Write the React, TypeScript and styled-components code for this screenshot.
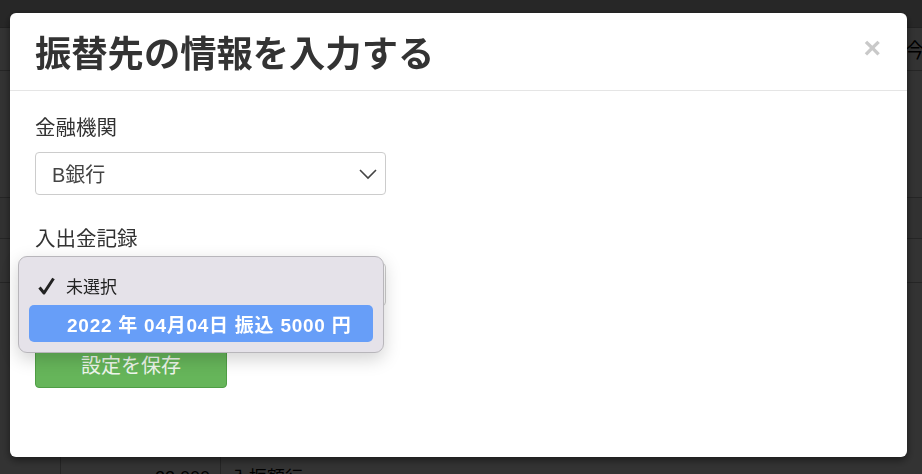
import styled, { createGlobalStyle } from "styled-components";

const GlobalStyle = createGlobalStyle`
  html, body {
    margin: 0;
    padding: 0;
    width: 922px;
    height: 474px;
    overflow: hidden;
    background: #fff;
    font-family: "Liberation Sans", "Noto Sans CJK JP", sans-serif;
    color: #333;
  }
`;

/* ---- page behind the modal ---- */

const Page = styled.div`
  width: 922px;
  height: 474px;
  background: #fff;
  display: flex;
  flex-direction: column;
`;

const TopBar = styled.div`
  height: 27px;
  background: #c4c4c4;
  border-bottom: 1px solid #aaa;
`;

const HeadRow = styled.div`
  height: 42px;
  display: grid;
  grid-template-columns: 905px 1fr;
  align-items: center;
  border-bottom: 1px solid #bbb;
  font-size: 20px;
  color: #000;
  white-space: nowrap;
  overflow: hidden;
`;

const Filler = styled.div<{ $h: number; $shade?: boolean }>`
  height: ${(p) => p.$h}px;
  border-bottom: 1px solid #bbb;
  background: ${(p) => (p.$shade ? "#f6f6f6" : "#fff")};
`;

const BottomRow = styled.div`
  flex: 1;
  display: grid;
  grid-template-columns: 60px 160px 1fr;
  align-items: end;
  font-size: 18px;
  color: #000;
`;

const Cell = styled.div<{ $right?: boolean; $line?: boolean }>`
  height: 100%;
  display: flex;
  align-items: flex-end;
  justify-content: ${(p) => (p.$right ? "flex-end" : "flex-start")};
  padding: 0 10px;
  border-left: ${(p) => (p.$line ? "1px solid #bbb" : "none")};
  line-height: 18px;
  margin-bottom: -13px;
`;

/* ---- overlay + modal ---- */

const Backdrop = styled.div`
  position: fixed;
  inset: 0;
  background: rgba(0, 0, 0, 0.8);
  padding: 13px 15px 17px 10px;
  box-sizing: border-box;
  display: flex;
`;

const Modal = styled.div`
  flex: 1;
  background: #fff;
  border-radius: 6px;
  box-shadow: 0 3px 9px rgba(0, 0, 0, 0.5);
  display: flex;
  flex-direction: column;
  position: relative;
`;

const Header = styled.div`
  height: 78px;
  box-sizing: border-box;
  border-bottom: 1px solid #e5e5e5;
  display: flex;
  align-items: center;
  justify-content: space-between;
  padding: 0 26px 0 25px;
`;

const Title = styled.h4`
  margin: 0;
  font-family: "Noto Sans CJK JP", sans-serif;
  font-size: 36.3px;
  font-weight: 700;
  line-height: 1.2;
  color: #333;
`;

const Close = styled.button`
  border: 0;
  background: none;
  padding: 0;
  margin-top: -8px;
  font-family: "Liberation Sans", sans-serif;
  font-size: 30px;
  font-weight: 700;
  line-height: 1;
  color: #c9c9c9;
  cursor: pointer;
`;

const Body = styled.div`
  padding: 23px 25px 0;
  display: flex;
  flex-direction: column;
  align-items: flex-start;
`;

const Group = styled.div`
  margin-bottom: 30px;
`;

const Label = styled.label`
  display: block;
  font-size: 20.5px;
  line-height: 27px;
  margin-bottom: 11px;
  color: #333;
`;

const SelectBox = styled.div`
  width: 351px;
  height: 43px;
  box-sizing: border-box;
  border: 1px solid #ccc;
  border-radius: 4px;
  background: #fff;
  display: flex;
  align-items: center;
  justify-content: space-between;
  padding: 0 8px 0 16px;
  font-size: 20px;
  color: #444;
`;

const Chevron = () => (
  <svg width="18" height="12" viewBox="0 0 18 12">
    <polyline points="1,2 9,10 17,2" fill="none" stroke="#444" strokeWidth="1.6" />
  </svg>
);

const SaveButton = styled.button`
  margin-top: 4px;
  width: 192px;
  height: 48px;
  border: 1px solid #4f9e45;
  border-radius: 4px;
  background: #66b55a;
  color: #eef6ec;
  font-family: "Noto Sans CJK JP", sans-serif;
  font-size: 20px;
`;

/* ---- native-looking popup menu ---- */

const Menu = styled.div`
  position: absolute;
  left: 8px;
  top: 243px;
  width: 366px;
  box-sizing: border-box;
  padding: 10px 10px 10px;
  background: #e5e2e9;
  border: 1px solid #b8b6bb;
  border-radius: 9px;
  box-shadow: 0 6px 18px rgba(0, 0, 0, 0.18);
`;

const Option = styled.div<{ $active?: boolean }>`
  height: 37px;
  border-radius: 5px;
  display: flex;
  align-items: center;
  padding-left: 8px;
  gap: ${(p) => (p.$active ? 12 : 11)}px;
  font-size: ${(p) => (p.$active ? 19 : 17)}px;
  letter-spacing: ${(p) => (p.$active ? 0.75 : 0)}px;
  background: ${(p) => (p.$active ? "#679ef8" : "transparent")};
  color: ${(p) => (p.$active ? "#fff" : "#222")};
  font-weight: ${(p) => (p.$active ? 600 : 400)};
  margin-bottom: ${(p) => (p.$active ? 0 : 1)}px;
`;

const CheckSlot = styled.span`
  width: 18px;
  display: flex;
  justify-content: center;
`;

const Check = () => (
  <svg width="17" height="18" viewBox="0 0 17 18">
    <path d="M1.5 10.5 L6 16 L15.5 1.5" fill="none" stroke="#222" strokeWidth="3" strokeLinejoin="round" />
  </svg>
);

export default function App() {
  return (
    <>
      <GlobalStyle />
      <Page>
        <TopBar />
        <HeadRow>
          <span />
          <span>今月の入出金</span>
        </HeadRow>
        <Filler $h={126} />
        <Filler $h={40} $shade />
        <Filler $h={43} />
        <BottomRow>
          <Cell />
          <Cell $right $line>23,000</Cell>
          <Cell $line>入振額行</Cell>
        </BottomRow>
      </Page>
      <Backdrop>
        <Modal>
          <Header>
            <Title>振替先の情報を入力する</Title>
            <Close aria-label="close">×</Close>
          </Header>
          <Body>
            <Group>
              <Label>金融機関</Label>
              <SelectBox>
                <span>B銀行</span>
                <Chevron />
              </SelectBox>
            </Group>
            <Group>
              <Label>入出金記録</Label>
              <SelectBox>
                <span>未選択</span>
                <Chevron />
              </SelectBox>
            </Group>
            <SaveButton>設定を保存</SaveButton>
          </Body>
          <Menu>
            <Option>
              <CheckSlot>
                <Check />
              </CheckSlot>
              未選択
            </Option>
            <Option $active>
              <CheckSlot />
              2022 年 04月04日 振込 5000 円
            </Option>
          </Menu>
        </Modal>
      </Backdrop>
    </>
  );
}
